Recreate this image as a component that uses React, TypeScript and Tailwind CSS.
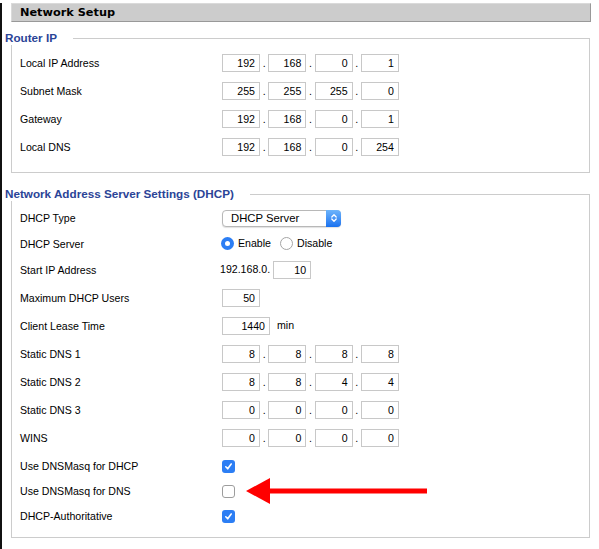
import { Fragment, type ReactNode } from "react";

const routerRows = [
  { label: "Local IP Address", ip: ["192", "168", "0", "1"] },
  { label: "Subnet Mask", ip: ["255", "255", "255", "0"] },
  { label: "Gateway", ip: ["192", "168", "0", "1"] },
  { label: "Local DNS", ip: ["192", "168", "0", "254"] },
];

function Box({ value, className = "w-[38px]" }: { value: string; className?: string }) {
  return (
    <div
      className={`${className} h-[18px] border border-[#c8c8c8] bg-white pr-[4px] text-right leading-[16px]`}
    >
      {value}
    </div>
  );
}

function Octets({ values }: { values: string[] }) {
  return (
    <div className="flex items-center">
      {values.map((v, i) => (
        <Fragment key={i}>
          {i > 0 && <span className="w-[8.3px] text-center leading-[18px]">.</span>}
          <Box value={v} />
        </Fragment>
      ))}
    </div>
  );
}

function Row({ label, h = "h-[28px]", children }: { label: string; h?: string; children?: ReactNode }) {
  return (
    <div className={`flex items-center ${h}`}>
      <div className="w-[210px] pl-2 pt-px">{label}</div>
      {children}
    </div>
  );
}

function Legend({ title }: { title: string }) {
  return (
    <div className="flex h-[14px] items-stretch">
      <span className="mr-4 font-['Liberation_Sans',Arial,sans-serif] text-[11.7px] font-bold leading-[14px] text-[#2b4497]">
        {title}
      </span>
      <div className="mt-[7px] flex-1 border-t border-r border-[#cccccc]" />
    </div>
  );
}

function Check({ on }: { on: boolean }) {
  if (!on)
    return <div className="h-[13px] w-[13px] rounded-[3px] border border-[#9d9d9d] bg-white" />;
  return (
    <div className="flex h-[13px] w-[13px] items-center justify-center rounded-[3px] bg-[#2c7ef4]">
      <svg width="9" height="9" viewBox="0 0 9 9">
        <path d="M1.8 4.8 L3.7 6.8 L7.2 2" fill="none" stroke="white" strokeWidth="1.6" strokeLinecap="round" strokeLinejoin="round" />
      </svg>
    </div>
  );
}

function Radio({ on }: { on: boolean }) {
  if (!on)
    return <div className="h-[13px] w-[13px] rounded-full border border-[#a5a5a5] bg-white" />;
  return (
    <div className="flex h-[13px] w-[13px] items-center justify-center rounded-full bg-[#2c7ef4]">
      <div className="h-[5px] w-[5px] rounded-full bg-white" />
    </div>
  );
}

function Select() {
  return (
    <div className="flex h-[17px] w-[119px] items-center rounded-[4px] border border-[#b8b8b8] bg-white shadow-[0_1px_1px_rgba(0,0,0,0.12)]">
      <span className="flex-1 pl-2 text-[11.3px] leading-[15px]">DHCP Server</span>
      <div className="flex h-[17px] w-[15px] -mr-px -my-px items-center justify-center rounded-r-[4px] bg-linear-to-b from-[#6db4fb] to-[#1871ef]">
        <svg width="8" height="12" viewBox="0 0 8 12">
          <path d="M1.8 5 L4 2.8 L6.2 5 M1.8 7 L4 9.2 L6.2 7" fill="none" stroke="white" strokeWidth="1.3" strokeLinecap="round" strokeLinejoin="round" />
        </svg>
      </div>
    </div>
  );
}

export default function App() {
  return (
    <div className="min-h-[549px] border-l-2 border-[#111111] bg-white font-['Liberation_Sans',Arial,sans-serif] text-[10.6px] text-black">
      {/* title bar */}
      <div className="mt-[3px] ml-[9px] mr-[8px] h-[19px] border border-t-[#dadada] border-l-[#dadada] border-b-[#999999] border-r-[#999999] bg-[#cccccc] pl-2 font-['DejaVu_Sans',Verdana,sans-serif] text-[11.3px] font-bold leading-[17px]">
        Network Setup
      </div>

      {/* Router IP */}
      <div className="mt-[9px] ml-[3px] mr-[9px]">
        <Legend title="Router IP" />
        <div className="ml-[6px] border-x border-b border-[#cccccc] pt-1 pb-[11px]">
          {routerRows.map((r) => (
            <Row key={r.label} label={r.label}>
              <Octets values={r.ip} />
            </Row>
          ))}
        </div>
      </div>

      {/* DHCP */}
      <div className="mt-[14px] ml-[3px] mr-[9px]">
        <Legend title="Network Address Server Settings (DHCP)" />
        <div className="ml-[6px] border-x border-b border-[#cccccc] pt-[3px] pb-[7px]">
          <Row label="DHCP Type">
            <Select />
          </Row>
          <Row label="DHCP Server" h="h-[24px]">
            <div className="-ml-px flex items-center">
              <Radio on />
              <span className="ml-[4px]">Enable</span>
              <div className="ml-[9px]">
                <Radio on={false} />
              </div>
              <span className="ml-[4px]">Disable</span>
            </div>
          </Row>
          <Row label="Start IP Address">
            <div className="-ml-[2px] flex items-center">
              <span className="mr-[3px]">192.168.0.</span>
              <div className="h-[19px]">
                <Box value="10" />
              </div>
            </div>
          </Row>
          <Row label="Maximum DHCP Users">
            <Box value="50" />
          </Row>
          <Row label="Client Lease Time">
            <Box value="1440" className="w-[48px]" />
            <span className="ml-[7px]">min</span>
          </Row>
          <Row label="Static DNS 1">
            <Octets values={["8", "8", "8", "8"]} />
          </Row>
          <Row label="Static DNS 2">
            <Octets values={["8", "8", "4", "4"]} />
          </Row>
          <Row label="Static DNS 3">
            <Octets values={["0", "0", "0", "0"]} />
          </Row>
          <Row label="WINS">
            <Octets values={["0", "0", "0", "0"]} />
          </Row>
          <Row label="Use DNSMasq for DHCP">
            <Check on />
          </Row>
          <Row label="Use DNSMasq for DNS" h="h-[22px]">
            <Check on={false} />
            <svg className="ml-[11px]" width="182" height="26" viewBox="0 0 182 26">
              <polygon points="0,13 24,0 24,26" fill="#ff0000" />
              <rect x="20" y="10.5" width="161" height="5" fill="#ff0000" />
            </svg>
          </Row>
          <Row label="DHCP-Authoritative">
            <Check on />
          </Row>
        </div>
      </div>
    </div>
  );
}
